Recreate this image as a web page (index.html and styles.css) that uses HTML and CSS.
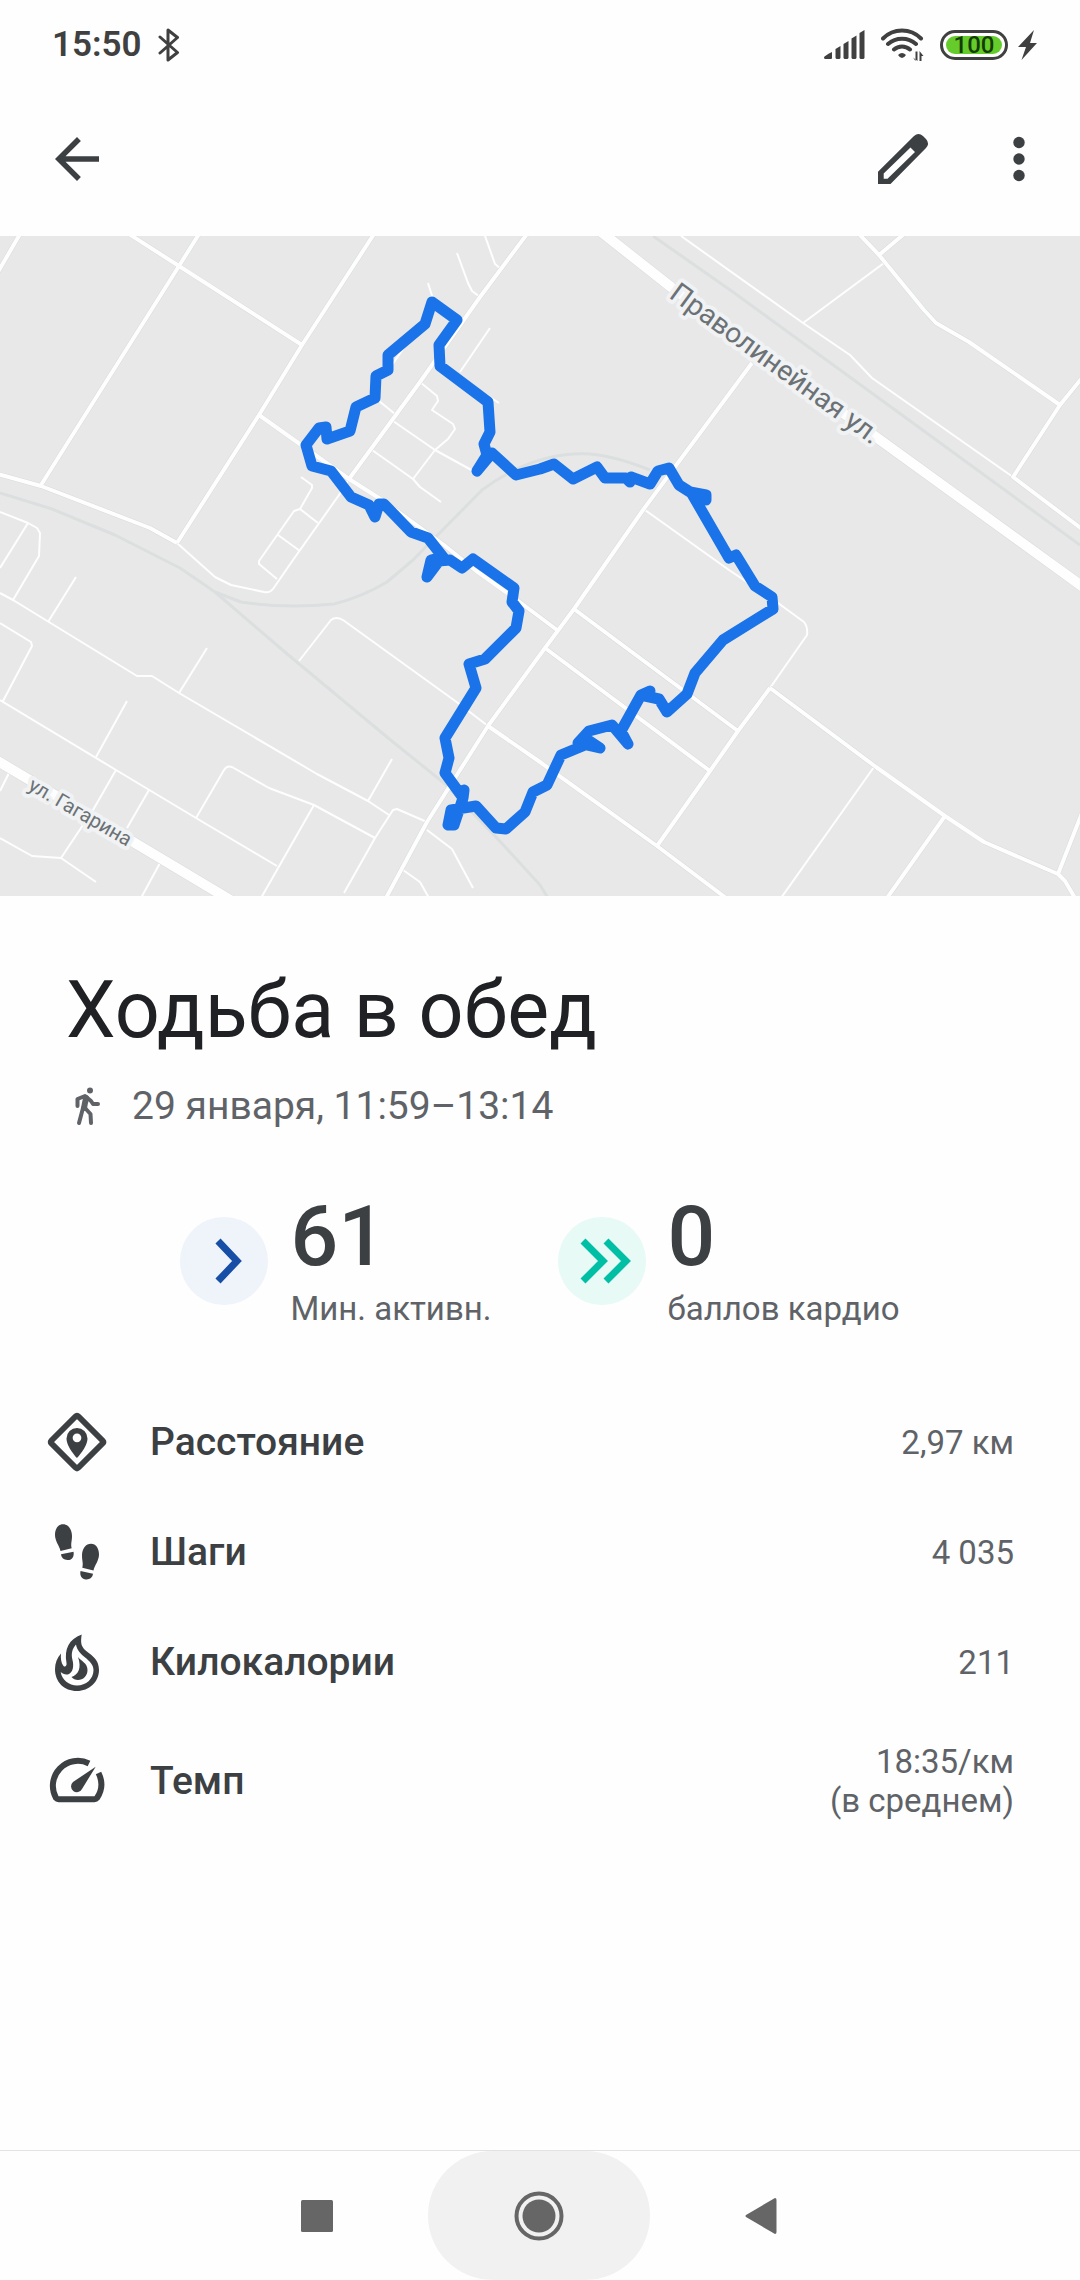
FILE: index.html
```
<!DOCTYPE html>
<html lang="ru">
<head>
<meta charset="utf-8">
<meta name="viewport" content="width=device-width, initial-scale=1">
<title>Ходьба в обед</title>
<link rel="stylesheet" href="styles.css">
</head>
<body>
<header class="status">
  <div class="status-group">
    <span class="clock">15:50</span>
    <svg class="bluetooth" width="22" height="36" viewBox="0 0 22 36" aria-hidden="true"><path d="M2 10L19.500 25.500 10 33V3L19.500 10.500 2 26"/></svg>
  </div>
  <div class="status-group">
    <svg width="41" height="30" viewBox="0 0 41 30" aria-hidden="true"><path d="M0 27.500Q0 26 8 22V28Q8 29 7 29H1.500Q0 29 0 27.500zM11.500 19L16.500 16V28L15.500 29H12.500L11.500 28zM19.500 14L24.500 11V28L23.500 29H20.500L19.500 28zM27.500 8.500L32.500 5.500V28L31.500 29H28.500L27.500 28zM35.500 3L40.500 0V28L39.500 29H36.500L35.500 28z"/></svg>
    <svg width="43" height="34" viewBox="0 0 43 34" aria-hidden="true"><g class="wifi-arcs"><path d="M2 10.500A26.600 26.600 0 0 1 40 10.500M7 16A21 21 0 0 1 35 16M13 21.500A12 12 0 0 1 29 21.500"/></g><path d="M17 27Q21 23 25 27Q23 30 21 30Q19 30 17 27zM34.500 33V23.500H36.500V33L32 29.500zM38.500 33V23L42.500 28H40.500V33z"/></svg>
    <div class="power">
      <div class="battery"><span class="battery-level">100</span></div>
      <svg width="20" height="30" viewBox="0 0 20 30" aria-hidden="true"><path d="M16 0L0 17H8L3.500 30 19 13H12z"/></svg>
    </div>
  </div>
</header>

<nav class="toolbar" aria-label="Действия">
  <button class="icon-button" type="button" aria-label="Назад"><svg width="66" height="66" viewBox="0 0 24 24"><path d="M20 11H7.830l5.590-5.590L12 4l-8 8 8 8 1.410-1.410L7.830 13H20v-2z"/></svg></button>
  <div class="toolbar-actions">
    <button class="icon-button" type="button" aria-label="Изменить"><svg width="66" height="66" viewBox="0 0 66 66"><path fill-rule="evenodd" d="M8 45.700L44 10Q48.500 6 53 10L56 13Q60 17.500 56 22L20.500 58H8zM13.700 47.500V52.700H17.500L45 26 40.500 21.500z"/></svg></button>
    <button class="icon-button" type="button" aria-label="Ещё"><svg width="66" height="66" viewBox="0 0 66 66"><circle cx="33" cy="16.500" r="5.700"/><circle cx="33" cy="33" r="5.700"/><circle cx="33" cy="49.500" r="5.700"/></svg></button>
  </div>
</nav>

<main>
<svg class="map" viewBox="0 0 1080 660" role="img" aria-label="Маршрут на карте">
  <g class="rail">
    <path d="M0 257L52 273 115 299 180 332 215 356 286 417 393 506 444 547 496 601 540 649 548 662"/>
    <path d="M215 356L241 366Q285 373 334 368Q362 361 387 346L413 324 482 254Q535 215 590 218Q615 220 650 234"/>
    <path d="M653 0L733 56 902 179 1080 309"/>
  </g>
  <g class="lane">
    <path d="M177 307L215 341 231 349 264 356Q270 357 273 353L293 324 339 259 349 243"/>
    <path d="M681 0L803 87 850 119 872 142 1013 241M803 87L884 27"/>
    <path d="M645 274L729 334 778 367 804 386Q808 391 807 399L770 452"/>
    <path d="M299 425L331 384Q336 380 343 384L458 467 488 490"/>
    <path d="M874 531L781 662M485 0L495 28 501 33M457 17L468 47 472 55 480 61M428 47L434 66"/>
    <path d="M490 92L460 136M482 156L499 167M379 165L395 178M388 135L405 110"/>
    <path d="M420 146L437 160 438 165 432 174 453 188 455 193 448 203 435 214 413 243"/>
    <path d="M393 185L435 214 475 236M372 214L413 243 420 251 441 266"/>
    <path d="M301 241L312 249V252L300 273 294 275 259 325V328L277 343M300 273L318 287M278 299L300 315"/>
    <path d="M0 276L28 287 37 292 40 297 39 320 13 364M28 287L0 332"/>
    <path d="M0 357L13 364 137 440 152 440 179 457 317 538 368 565 389 579"/>
    <path d="M76 341L48 386M207 412L179 457M0 387L31 406 32 410 3 465M0 464L116 534 196 582 277 630"/>
    <path d="M127 465L96 521M116 534L93 574 61 622M0 602L32 620 61 622 96 646M149 554L127 592M9 537L0 555"/>
    <path d="M196 582L224 534Q227 529 232 531L269 552 314 569 375 602M314 569L261 662M392 523L368 565"/>
    <path d="M427 586L397 573 393 574 375 602 344 657M427 594L452 613 473 652M403 634L420 646 429 662M160 627L141 662"/>
  </g>
  <g class="street-edge">
    <path d="M-2 36L20 -2M129 -2L179 30 302 109M199 -2L179 30 41 249M374 -2L302 109 259 179 177 307M-2 238L41 250 150 292 177 307"/>
    <path d="M259 179L349 243 382 264 444 309 475 334 517 364 557 394M527 -2L480 61 420 146 349 243"/>
    <path d="M752 127L643 274 574 373 545 412 488 490 427 586 386 662"/>
    <path d="M859 -2L879 19 924 74 936 87 969 106 1060 169M904 -2L879 19M1082 142L1060 169 1013 241 1082 293"/>
    <path d="M770 452L738 495 710 535 657 610M574 373L738 495M545 412L710 535M488 490L540 526 657 610 726 662"/>
    <path d="M770 452L876 531 945 580 984 606 1058 638 1065 645 1075 662M1082 577L1058 638M945 580L887 662"/>
  </g>
  <g class="street">
    <path d="M-2 36L20 -2M129 -2L179 30 302 109M199 -2L179 30 41 249M374 -2L302 109 259 179 177 307M-2 238L41 250 150 292 177 307"/>
    <path d="M259 179L349 243 382 264 444 309 475 334 517 364 557 394M527 -2L480 61 420 146 349 243"/>
    <path d="M752 127L643 274 574 373 545 412 488 490 427 586 386 662"/>
    <path d="M859 -2L879 19 924 74 936 87 969 106 1060 169M904 -2L879 19M1082 142L1060 169 1013 241 1082 293"/>
    <path d="M770 452L738 495 710 535 657 610M574 373L738 495M545 412L710 535M488 490L540 526 657 610 726 662"/>
    <path d="M770 452L876 531 945 580 984 606 1058 638 1065 645 1075 662M1082 577L1058 638M945 580L887 662"/>
  </g>
  <path class="avenue-edge" d="M600 -5L671 51 876 201 1090 356M-4 524L28 543 232 665"/>
  <path class="avenue" d="M600 -5L671 51 876 201 1090 356M-4 524L28 543 232 665"/>
  <text class="street-name" transform="translate(668 61) rotate(36)" font-size="28">Праволинейная ул.</text>
  <text class="street-name" transform="translate(27 553) rotate(30)" font-size="20">ул. Гагарина</text>
  <path class="route" d="M432 66L457 84 439 109 440 130 488 166 490 196 484 208 487 219 477 235 492 217 516 239 540 233 554 228 573 243 597 231 605 242 626 242 630 246 631 241 650 248 658 235 669 232 679 249 690 256 706 259 706 264 692 258 729 322 736 319 755 350 772 361 773 373 723 404 695 437 687 458 667 476 659 463 645 460 650 455 641 459 621 495 628 508 612 489 589 495 578 507 600 512 588 504 585 509 561 519 547 549 533 556 525 576 506 593 496 592 476 570 451 574 448 589 454 589 463 562 464 554 461 559 445 537 449 522 445 502 476 452 469 428 485 423 516 392 519 375 512 366 514 352 473 323 462 332 450 324 439 325 427 341 431 324 443 321 428 302 411 296 384 268 379 268 375 281 369 269 351 261 331 235 312 230 306 209 319 192 326 191 327 203 350 195 356 171 375 162 376 140 388 134 388 119 425 88z"/>
</svg>

<section class="heading">
  <h1>Ходьба в обед</h1>
  <p class="when">
    <svg width="30" height="40" viewBox="0 0 30 40" aria-hidden="true"><circle cx="20" cy="4.500" r="3"/><g class="walker"><path d="M7.500 20V13L15 10 21 15 23 18 28 18M13 22L9 37M15 22L20.500 28 21 37"/><path class="torso" d="M16 12L14 22"/></g></svg>
    <span>29 января, 11:59–13:14</span>
  </p>
</section>

<section class="scores" aria-label="Баллы">
  <div class="score">
    <svg width="88" height="88" viewBox="0 0 88 88" aria-hidden="true"><circle class="disc-blue" cx="44" cy="44" r="44"/><path class="chevron-blue" d="M38 24L57 44 38 64"/></svg>
    <div><strong>61</strong><span>Мин. активн.</span></div>
  </div>
  <div class="score">
    <svg width="88" height="88" viewBox="0 0 88 88" aria-hidden="true"><circle class="disc-teal" cx="44" cy="44" r="44"/><path class="chevron-teal" d="M25 24L45 44 25 64M48 24L68 44 48 64"/></svg>
    <div><strong>0</strong><span>баллов кардио</span></div>
  </div>
</section>

<dl class="metrics">
  <div class="metric">
    <svg width="66" height="66" viewBox="0 0 66 66" aria-hidden="true"><path class="line" d="M31.500 7.500Q33 6 34.500 7.500L58.500 31.500Q60 33 58.500 34.500L34.500 58.500Q33 60 31.500 58.500L7.500 34.500Q6 33 7.500 31.500z"/><path fill-rule="evenodd" d="M33 49C33 49 22.500 38 22.500 29.500A10.500 10.500 0 0 1 43.500 29.500C43.500 38 33 49 33 49zM33 24.500A4.300 4.300 0 1 0 33 33.200A4.300 4.300 0 1 0 33 24.500z"/></svg>
    <dt>Расстояние</dt><dd>2,97 км</dd>
  </div>
  <div class="metric">
    <svg width="66" height="66" viewBox="0 0 66 66" aria-hidden="true"><path d="M19 5.300C24 5.300 28 10 28 17C28 22 26.500 25 27.700 29.300L16.500 32C15.500 27 11 22 11 16C11 10 14 5.300 19 5.300zM17 35.300L29.500 32.700C30.500 37.500 28 41 24 41C20 41.200 17.500 39 17 35.300z"/><path d="M47 24.700C42 24.700 38 29.400 38 36.400C38 41.400 39.500 44.400 38.300 48.700L49.500 51.400C50.500 46.400 55 41.400 55 35.400C55 29.400 52 24.700 47 24.700zM49 54.700L36.500 52.100C35.500 56.900 38 60.400 42 60.400C46 60.600 48.500 58.400 49 54.700z"/></svg>
    <dt>Шаги</dt><dd>4 035</dd>
  </div>
  <div class="metric">
    <svg width="66" height="66" viewBox="0 0 66 66" aria-hidden="true"><path fill-rule="evenodd" d="M37.700 5.500C37 10 36.500 15 39 18.500C43 25 55 27 55 41C55 53 45 62 33 62C20 62 11 53 11 40C11 34 13 29 17 24.500C16.500 29 17 34 19.500 37C21 38.500 23 37 22.500 34C20 20 25 10 37.700 5.500zM32 15.500C28 20 27 25 28.500 31C30 37 29 43 25 45C22 46.300 19 45 16.700 43C18 51 25 56.500 33 56.500C42 56.500 49.500 50 49.500 41C49.500 30 34 28 32 15.500z"/><path d="M34 28C37 32 43.500 34 43.500 41C43.500 47 39 51 34 51C31.500 51 29 50 27.500 48C34 46 38 39 34 28z"/></svg>
    <dt>Килокалории</dt><dd>211</dd>
  </div>
  <div class="metric">
    <svg width="66" height="66" viewBox="0 0 66 66" aria-hidden="true"><path class="line" d="M45 15.500A25 25 0 0 0 12 50Q13 51.300 14.500 51.300H50.500Q52 51.300 53 50Q61 38 54.500 25"/><path d="M51.700 18.700L38 41A5.800 5.800 0 1 1 29 34z"/></svg>
    <dt>Темп</dt><dd>18:35/км<br>(в среднем)</dd>
  </div>
</dl>
</main>

<footer class="system-nav">
  <button class="nav-button" type="button" aria-label="Недавние"><svg width="32" height="32" viewBox="0 0 32 32"><rect width="32" height="32" rx="1.500"/></svg></button>
  <button class="nav-button nav-home" type="button" aria-label="Домой"><svg width="50" height="50" viewBox="0 0 50 50"><circle class="ring" cx="25" cy="25" r="22.500"/><circle cx="25" cy="25" r="16.500"/></svg></button>
  <button class="nav-button" type="button" aria-label="Назад"><svg width="32" height="36" viewBox="0 0 32 36"><path d="M30 0Q31.500 0 31.500 2V34Q31.500 36 30 36L1 19Q0 18 1 17z"/></svg></button>
</footer>
</body>
</html>
```

FILE: styles.css
```
* {
  box-sizing: border-box;
}

body {
  display: flex;
  flex-direction: column;
  min-height: 100vh;
  margin: 0;
  background: #fefefe;
  color: #3c4043;
  font-family: Roboto, "Noto Sans", sans-serif;
}

svg {
  display: block;
  flex: none;
  fill: #3c4043;
}

button {
  display: flex;
  align-items: center;
  justify-content: center;
  padding: 0;
  border: 0;
  background: none;
}

/* Status bar */
.status {
  display: flex;
  align-items: center;
  justify-content: space-between;
  height: 88px;
  padding: 2px 42px 0 52px;
}

.status-group {
  display: flex;
  align-items: center;
  gap: 16px;
}

.power {
  display: flex;
  align-items: center;
  gap: 10px;
}

.status svg {
  fill: #404040;
}

.status .bluetooth,
.wifi-arcs {
  fill: none;
  stroke: #404040;
  stroke-width: 3;
  stroke-linecap: round;
  stroke-linejoin: round;
}

.wifi-arcs {
  stroke-width: 4;
}

.clock {
  color: #404040;
  font-size: 35px;
  font-weight: 600;
  line-height: 40px;
}

.battery {
  width: 68px;
  height: 30px;
  padding: 3px;
  border: 3px solid #404040;
  border-radius: 15px;
}

.battery-level {
  display: block;
  border-radius: 9px;
  background: #66cc2c;
  color: #133c00;
  font-size: 24px;
  font-weight: 500;
  line-height: 18px;
  text-align: center;
}

/* App bar */
.toolbar {
  display: flex;
  align-items: center;
  justify-content: space-between;
  height: 148px;
  padding: 0 28px 6px 44px;
}

.toolbar-actions {
  display: flex;
  gap: 50px;
}

/* Map */
.map {
  width: 100%;
  height: auto;
  background: #e8e8e8;
  stroke-linejoin: round;
}

.map path {
  fill: none;
}

.rail {
  stroke: #dcdfdf;
  stroke-width: 3;
}

.lane {
  stroke: #fefefe;
  stroke-width: 2;
}

.street-edge {
  stroke: #d8dbdc;
  stroke-width: 5;
}

.street {
  stroke: #fefefe;
  stroke-width: 4;
}

.avenue-edge {
  stroke: #d8dbdc;
  stroke-width: 11;
}

.avenue {
  stroke: #fefefe;
  stroke-width: 10;
}

.route {
  stroke: #1a73e8;
  stroke-width: 11;
}

.street-name {
  fill: #6b7174;
  stroke: #f0f2f4;
  stroke-width: 8;
  stroke-linejoin: round;
  paint-order: stroke;
}

/* Title */
.heading {
  padding: 60px 66px 0;
}

h1 {
  margin: 0;
  color: #202124;
  font-size: 79px;
  font-weight: 400;
  line-height: 108px;
}

.when {
  display: flex;
  align-items: center;
  gap: 32px;
  margin: 16px 0 0;
  padding-left: 4px;
  color: #5f6368;
  font-size: 39px;
  line-height: 52px;
}

.when svg {
  fill: #5f6368;
}

.walker {
  fill: none;
  stroke: #5f6368;
  stroke-width: 4;
  stroke-linecap: round;
  stroke-linejoin: round;
}

.torso {
  stroke-width: 6;
}

/* Scores */
.scores {
  display: flex;
  justify-content: center;
  gap: 66px;
  padding-top: 57px;
}

.score {
  display: flex;
  align-items: center;
  gap: 22px;
}

.score strong,
.score span {
  display: block;
}

.score strong {
  font-size: 84px;
  font-weight: 500;
  line-height: 96px;
}

.score span {
  color: #5f6368;
  font-size: 33px;
  line-height: 48px;
}

.disc-blue {
  fill: #eff3fa;
}

.disc-teal {
  fill: #e7faf6;
}

.chevron-blue,
.chevron-teal {
  fill: none;
  stroke: #174ea6;
  stroke-width: 7;
}

.chevron-teal {
  stroke: #00bfa5;
}

/* Metrics */
.metrics {
  margin: 0;
  padding: 54px 66px 0 44px;
}

.metric {
  display: flex;
  align-items: center;
  min-height: 110px;
}

.metric:last-child {
  min-height: 128px;
}

.line {
  fill: none;
  stroke: #3c4043;
  stroke-width: 6;
}

dt {
  margin-left: 40px;
  font-size: 39px;
  font-weight: 500;
  line-height: 48px;
}

dd {
  margin: 0 0 0 auto;
  color: #5f6368;
  font-size: 33px;
  line-height: 39px;
  text-align: right;
}

/* System navigation */
.system-nav {
  display: flex;
  justify-content: center;
  height: 130px;
  margin-top: auto;
  padding-right: 2px;
  border-top: 1px solid #e2e2e2;
}

.nav-button {
  width: 222px;
}

.nav-home {
  border-radius: 65px;
  background: #f1f1f1;
}

.system-nav svg {
  fill: #666;
}

.system-nav .ring {
  fill: none;
  stroke: #666;
  stroke-width: 4;
}
```
